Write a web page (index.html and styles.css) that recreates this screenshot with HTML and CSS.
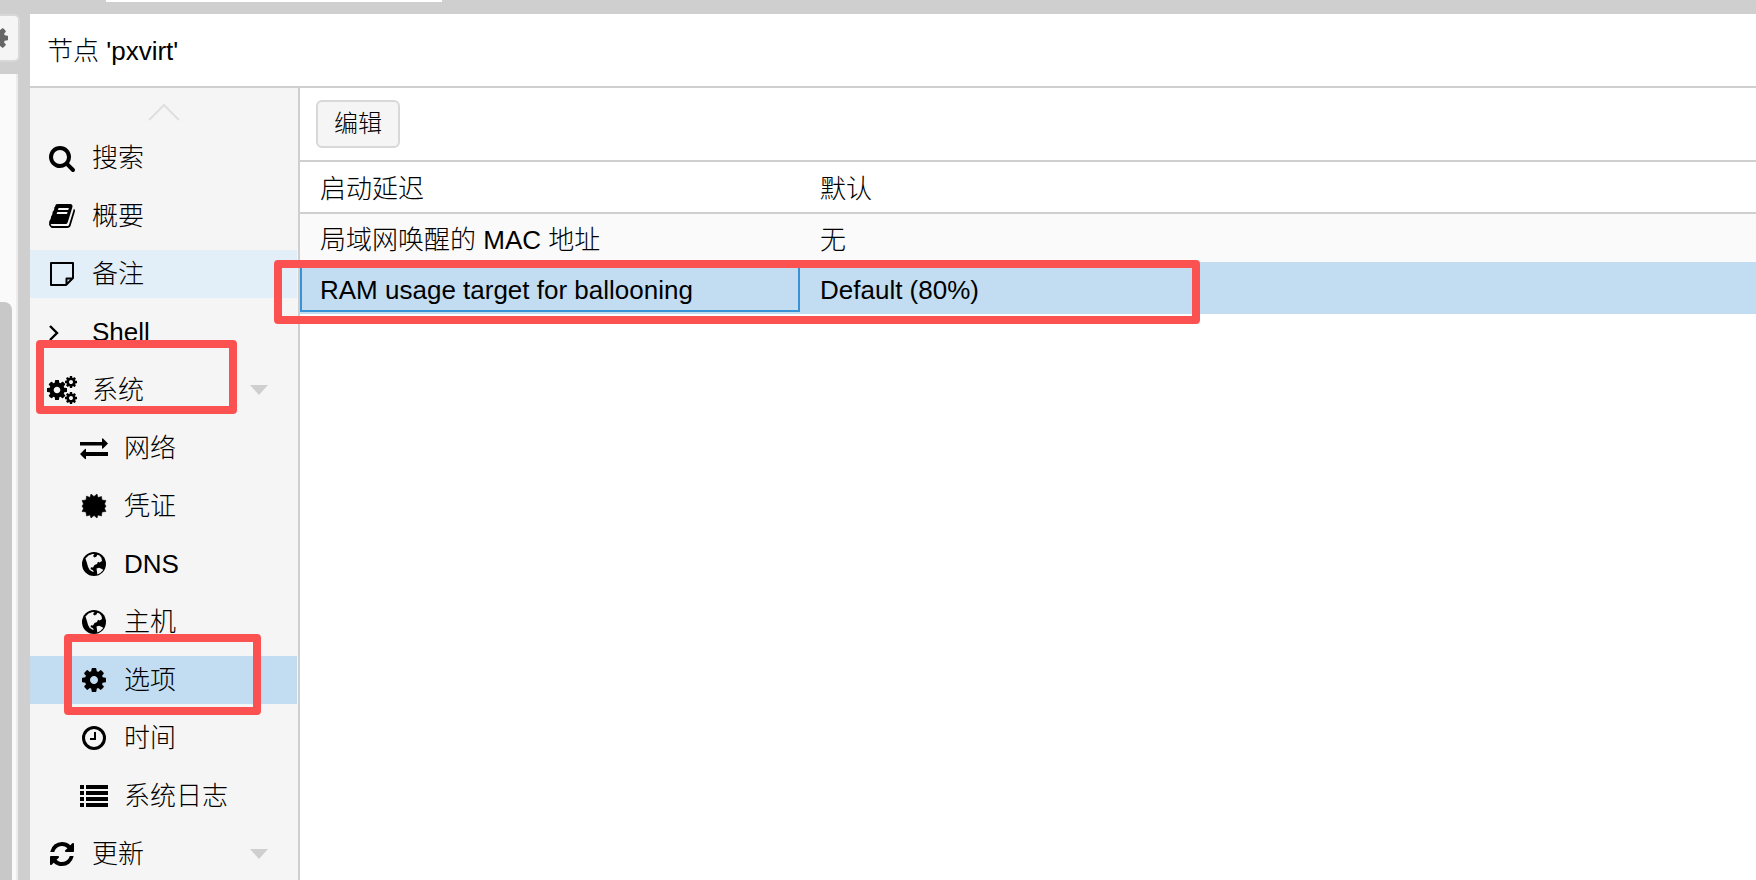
FILE: index.html
```html
<!DOCTYPE html>
<html lang="zh-CN">

<head>
  <meta charset="utf-8">
  <title>节点 'pxvirt'</title>
  <link rel="stylesheet" href="styles.css">
</head>

<body>
  <svg class="sprite" xmlns="http://www.w3.org/2000/svg">
    <symbol id="i-search" viewBox="0 0 1792 1792">
      <path d="M1216 832q0-185-131.5-316.5t-316.5-131.5-316.5 131.5-131.5 316.5 131.5 316.5 316.5 131.5 316.5-131.5 131.5-316.5zm512 832q0 52-38 90t-90 38q-54 0-90-38l-343-342q-179 124-399 124-143 0-273.5-55.5t-225-150-150-225-55.5-273.5 55.5-273.5 150-225 225-150 273.5-55.5 273.5 55.5 225 150 150 225 55.5 273.5q0 220-124 399l343 343q37 37 37 90z" />
    </symbol>
    <symbol id="i-book" viewBox="0 0 1792 1792">
      <path d="M1703 478q40 57 18 129l-275 906q-19 64-76.5 107.5t-122.5 43.5h-923q-77 0-148.5-53.5t-99.5-131.5q-24-67-2-127 0-4 3-27t4-37q1-8-3-21.5t-3-19.5q2-11 8-21t16.5-23.5 16.5-23.5q23-38 45-91.5t30-91.5q3-10 .5-30t-.5-28q3-11 17-28t17-23q21-36 42-92t25-90q1-9-2.5-32t.5-28q4-13 22-30.5t22-22.5q19-26 42.5-84.5t27.5-96.5q1-8-3-25.5t-2-26.5q2-8 9-18t18-23 17-21q8-12 16.5-30.5t15-35 16-36 19.5-32 26.5-23.5 36-11.5 47.5 5.5l-1 3q38-9 51-9h761q74 0 114 56t18 130l-274 906q-36 119-71.5 153.5t-128.5 34.5h-869q-27 0-38 15-11 16-1 43 24 70 144 70h923q29 0 56-15.5t35-41.5l300-987q7-22 5-57 38 15 59 43zm-1064 2q-4 13 2 22.5t20 9.5h608q13 0 25.5-9.5t16.5-22.5l21-64q4-13-2-22.5t-20-9.5h-608q-13 0-25.5 9.5t-16.5 22.5zm-83 256q-4 13 2 22.5t20 9.5h608q13 0 25.5-9.5t16.5-22.5l21-64q4-13-2-22.5t-20-9.5h-608q-13 0-25.5 9.5t-16.5 22.5z" />
    </symbol>
    <symbol id="i-note" viewBox="0 0 28 28">
      <path d="M3 3h22v15l-7 7H3zM25 18.500h-6.500V25" fill="none" stroke="#000" stroke-width="2" stroke-linejoin="round" />
    </symbol>
    <symbol id="i-angle" viewBox="0 0 28 28">
      <path d="M2 8l7 7-7 7" fill="none" stroke="#000" stroke-width="2.400" />
    </symbol>
    <symbol id="i-cog" viewBox="0 0 1792 1792">
      <path d="M1152 896q0-106-75-181t-181-75-181 75-75 181 75 181 181 75 181-75 75-181zm512-109v222q0 12-8 23t-20 13l-185 28q-19 54-39 91 35 50 107 138 10 12 10 25t-9 23q-27 37-99 108t-94 71q-12 0-26-9l-138-108q-44 23-91 38-16 136-29 186-7 28-36 28h-222q-14 0-24.500-8.500t-11.500-21.500l-28-184q-49-16-90-37l-141 107q-10 9-25 9-14 0-25-11-126-114-165-168-7-10-7-23 0-12 8-23 15-21 51-66.500t54-70.500q-27-50-41-99l-183-27q-13-2-21-12.500t-8-23.500v-222q0-12 8-23t19-13l186-28q14-46 39-92-40-57-107-138-10-12-10-24 0-10 9-23 26-36 98.500-107.500t94.500-71.500q13 0 26 10l138 107q44-23 91-38 16-136 29-186 7-28 36-28h222q14 0 24.500 8.500t11.500 21.500l28 184q49 16 90 37l142-107q9-9 24-9 13 0 25 10 129 119 165 170 7 8 7 22 0 12-8 23-15 21-51 66.500t-54 70.500q26 50 41 98l183 28q13 2 21 12.500t8 23.500z" />
    </symbol>
    <symbol id="i-cogs" viewBox="0 0 28 28" overflow="visible">
      <use href="#i-cog" x="-2.700" y="2.300" width="23.400" height="23.400" />
      <use href="#i-cog" x="16" y="-1" width="14" height="14" />
      <use href="#i-cog" x="16" y="15" width="14" height="14" />
    </symbol>
    <symbol id="i-exchange" viewBox="0 0 28 28">
      <path d="M0 8h22V5q0-1 1-.5l5 5-5 5q-1 .5-1-.5v-2.500H0zM28 18H6v-2.500q0-1-1-.5l-5 5 5 5q1 .5 1-.5V22h22z" />
    </symbol>
    <symbol id="i-cert" viewBox="0 0 28 28">
      <path d="M14 4.500L17 2l1 3.500L21.500 4.500 22 8l4 .5-1.500 3.500L26 14l-1.500 2.500L26 19.500l-4 .5-.5 4-3.500-1L17 26l-3-2.500L11 26l-1-3-3.500 1L6 20l-4-.5 1.500-3L2 14l1.500-2L2 8.500 6 8l.5-4 3.500 1.500L11 2z" stroke="#000" stroke-linejoin="round" stroke-width=".5" />
    </symbol>
    <symbol id="i-globe" viewBox="0 0 28 28">
      <circle cx="14" cy="14" r="12" />
      <path class="land" d="M5.500 8.500l3-3 4-1.500 2 .2-1.500 1.800 1.500 1.500 2-1 .8-1.700 2.200.7 2 2.500.5 3-2.500 1.500-1.500-.8-1 2.300-2.500 1-1.500 2.500-2-.3-.5 1.800 2 1 1.500 1.500-1.500.2-3-2-1.500-3-1-3.500zM16.500 18.500l2.500-.7 3 1.200 1.300 1-3 3-3 1.500-.3-2.500z" />
    </symbol>
    <symbol id="i-clock" viewBox="0 0 28 28">
      <circle cx="14" cy="14" r="10.500" fill="none" stroke="#000" stroke-width="3" />
      <path d="M15 8v7h-5" fill="none" stroke="#000" stroke-width="2" />
    </symbol>
    <symbol id="i-list" viewBox="0 0 28 28">
      <path d="M0 3h4v4H0zM6 3h22v4H6zM0 9h4v4H0zM6 9h22v4H6zM0 15h4v4H0zM6 15h22v4H6zM0 21h4v4H0zM6 21h22v4H6z" />
    </symbol>
    <symbol id="i-refresh" viewBox="0 0 1792 1792">
      <path d="M1639 1056q0 5-1 7-64 268-268 434.500t-478 166.500q-146 0-282.500-55t-243.500-157l-129 129q-19 19-45 19t-45-19-19-45v-448q0-26 19-45t45-19h448q26 0 45 19t19 45-19 45l-137 137q71 66 161 102t187 36q134 0 250-65t186-179q11-17 53-117 8-23 30-23h192q13 0 22.500 9.500t9.500 22.500zm25-800v448q0 26-19 45t-45 19h-448q-26 0-45-19t-19-45 19-45l138-138q-148-137-349-137-134 0-250 65t-186 179q-11 17-53 117-8 23-30 23h-199q-13 0-22.500-9.500t-9.500-22.500v-7q65-268 270-434.500t480-166.500q146 0 284 55.500t245 156.500l130-129q19-19 45-19t45 19 19 45z" />
    </symbol>
  </svg>

  <div class="topbar">
    <div class="topbar-field"></div>
  </div>

  <div class="workspace">
    <aside class="tree">
      <button class="tree-settings" type="button" aria-label="设置">
        <svg><use href="#i-cog" /></svg>
      </button>
      <div class="tree-body">
        <div class="tree-thumb"></div>
      </div>
    </aside>

    <main class="panel">
      <h1>节点 'pxvirt'</h1>
      <div class="panel-body">
        <nav>
          <svg class="scroll-up" viewBox="0 0 32 18"><path d="M1 17L16 2l15 15" /></svg>
          <ul>
            <li><a href="#"><svg><use href="#i-search" /></svg>搜索</a></li>
            <li><a href="#"><svg><use href="#i-book" /></svg>概要</a></li>
            <li><a href="#" class="hover"><svg><use href="#i-note" /></svg>备注</a></li>
            <li><a href="#"><svg><use href="#i-angle" /></svg>Shell</a></li>
            <li>
              <a href="#" class="parent"><svg><use href="#i-cogs" /></svg>系统<span class="mark mark-system"></span></a>
              <ul>
                <li><a href="#"><svg><use href="#i-exchange" /></svg>网络</a></li>
                <li><a href="#"><svg><use href="#i-cert" /></svg>凭证</a></li>
                <li><a href="#"><svg><use href="#i-globe" /></svg>DNS</a></li>
                <li><a href="#"><svg><use href="#i-globe" /></svg>主机</a></li>
                <li><a href="#" class="selected"><svg><use href="#i-cog" /></svg>选项<span class="mark mark-options"></span></a></li>
                <li><a href="#"><svg><use href="#i-clock" /></svg>时间</a></li>
                <li><a href="#"><svg><use href="#i-list" /></svg>系统日志</a></li>
              </ul>
            </li>
            <li><a href="#" class="parent"><svg><use href="#i-refresh" /></svg>更新</a></li>
          </ul>
        </nav>

        <section class="content">
          <div class="toolbar">
            <button type="button">编辑</button>
          </div>
          <table>
            <tr>
              <td>启动延迟</td>
              <td>默认</td>
            </tr>
            <tr class="alt">
              <td>局域网唤醒的 MAC 地址</td>
              <td>无</td>
            </tr>
            <tr class="selected">
              <td class="focus">RAM usage target for ballooning<span class="mark mark-row"></span></td>
              <td>Default (80%)</td>
            </tr>
          </table>
        </section>
      </div>
    </main>
  </div>
</body>

</html>
```

FILE: styles.css
```css
* {
  box-sizing: border-box;
}

body {
  margin: 0;
  height: 100vh;
  overflow: hidden;
  display: flex;
  flex-direction: column;
  background: #cfcfcf;
  color: #000;
  font-family: "Helvetica Neue", "Liberation Sans", "Noto Sans CJK SC", sans-serif;
  font-weight: 300;
  font-size: 26px;
  line-height: 36px;
}

ul {
  list-style: none;
  margin: 0;
  padding: 0;
}

.sprite {
  display: none;
}

/* top strip */
.topbar {
  height: 14px;
  padding-left: 106px;
  flex: none;
}

.topbar-field {
  width: 336px;
  height: 2px;
  background: #fff;
}

.workspace {
  flex: 1;
  min-height: 0;
  display: flex;
}

/* resource tree, mostly scrolled out on the left */
.tree {
  width: 30px;
  flex: none;
  display: flex;
  flex-direction: column;
  align-items: flex-start;
  gap: 12px;
}

.tree-settings {
  width: 20px;
  height: 48px;
  padding: 0;
  display: flex;
  align-items: center;
  justify-content: flex-end;
  border: 2px solid #d8d8d8;
  border-left: 0;
  border-radius: 0 6px 6px 0;
  background: #f5f5f5;
  overflow: hidden;
}

.tree-settings svg {
  width: 28px;
  height: 28px;
  flex: none;
  margin-right: 8px;
  fill: #666;
}

.tree-body {
  flex: 1;
  width: 18px;
  padding-top: 228px;
  border-right: 2px solid #ececec;
  background: #fafafa;
}

.tree-thumb {
  width: 12px;
  height: 100%;
  border-radius: 0 8px 0 0;
  background: #c8c8c8;
}

/* node panel */
.panel {
  flex: 1;
  min-width: 0;
  display: flex;
  flex-direction: column;
  background: #fff;
}

h1 {
  margin: 0;
  padding: 19px 17px 17px;
  border-bottom: 2px solid #cfcfcf;
  font-size: 26px;
  font-weight: 300;
}

.panel-body {
  flex: 1;
  min-height: 0;
  display: flex;
}

nav {
  width: 270px;
  flex: none;
  padding-top: 15px;
  border-right: 2px solid #cfcfcf;
  background: #f5f5f5;
}

.scroll-up {
  display: block;
  width: 32px;
  height: 18px;
  margin: 0 auto 13px;
  fill: none;
  stroke: #dfdfdf;
  stroke-width: 2;
}

nav a {
  position: relative;
  display: flex;
  align-items: center;
  gap: 16px;
  height: 48px;
  margin: 0 1px 10px 0;
  padding-left: 18px;
  color: inherit;
  text-decoration: none;
}

nav a svg {
  width: 28px;
  height: 28px;
  flex: none;
  overflow: visible;
}

nav ul ul a {
  padding-left: 50px;
}

nav .hover {
  background: #e2eef8;
}

nav .selected {
  background: #c2ddf2;
}

.parent::after {
  content: "";
  margin-left: auto;
  margin-right: 29px;
  border: 9px solid transparent;
  border-top: 10px solid #cfcfcf;
  border-bottom: 0;
}

.land {
  fill: #f5f5f5;
}

/* options grid */
.content {
  flex: 1;
  min-width: 0;
}

.toolbar {
  padding: 12px 16px;
  border-bottom: 2px solid #cfcfcf;
}

.toolbar button {
  display: block;
  height: 48px;
  padding: 0 16px;
  border: 2px solid #d8d8d8;
  border-radius: 6px;
  background: #f5f5f5;
  color: inherit;
  font: inherit;
  font-size: 24px;
}

table {
  width: 100%;
  table-layout: fixed;
  border-spacing: 0;
}

td {
  height: 52px;
  padding: 3px 20px 0;
  border-bottom: 2px solid #cfcfcf;
}

td:first-child {
  width: 500px;
}

.alt td {
  height: 48px;
  border: 0;
  background: #fafafa;
}

tr.selected td {
  position: relative;
  border: 0;
  background: #c2ddf2;
}

.focus::before {
  content: "";
  position: absolute;
  inset: 0 0 2px;
  border: 2px solid #3892d4;
}

/* red highlight frames */
.mark {
  position: absolute;
  z-index: 2;
  border: 8px solid #fb5251;
  border-radius: 4px;
}

.mark-system {
  top: -26px;
  bottom: 0;
  left: 6px;
  width: 201px;
}

.mark-options {
  top: -22px;
  bottom: -11px;
  left: 34px;
  width: 197px;
}

.mark-row {
  top: -2px;
  bottom: -10px;
  left: -26px;
  width: 926px;
}
```
